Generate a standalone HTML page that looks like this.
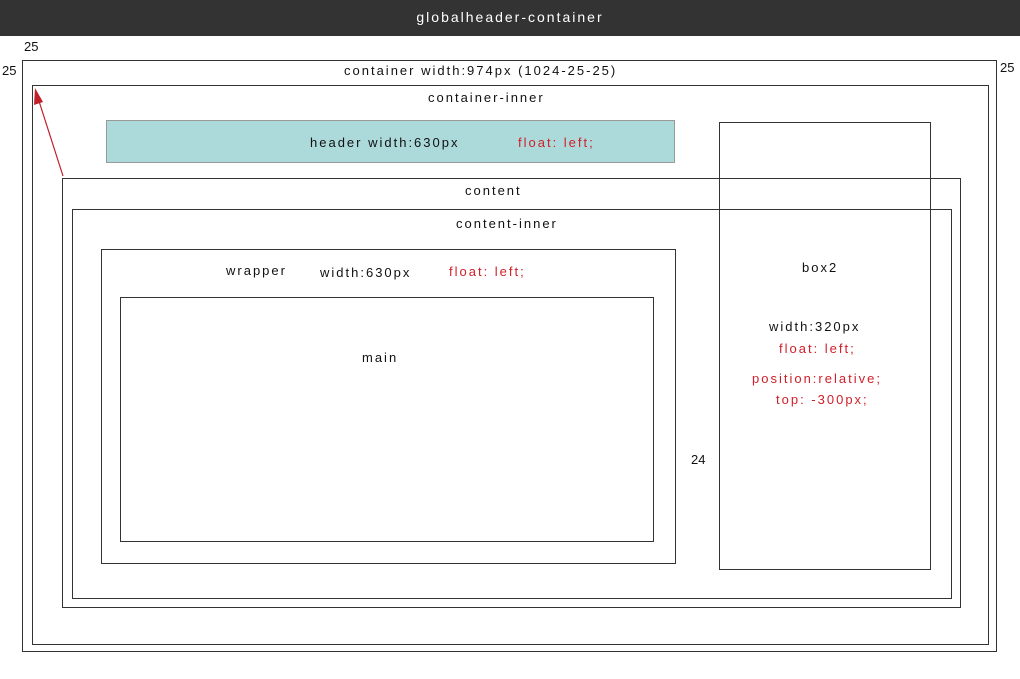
<!DOCTYPE html><html><head><style>
body{margin:0;width:1020px;height:679px;background:#fff;position:relative;font-family:"Liberation Sans",sans-serif;overflow:hidden}
.b{position:absolute;border:1px solid #333;box-sizing:border-box}
.t{position:absolute;font-size:13px;letter-spacing:2px;color:#111;white-space:nowrap}
.r{color:#d0202a}
</style></head><body>
<div style="position:absolute;left:0;top:0;width:1020px;height:36px;background:#333"></div>
<div class="t" style="left:0;width:1020px;text-align:center;top:9px;color:#fff;font-size:14px">globalheader-container</div>
<div class="b" style="left:22px;top:60px;width:975px;height:592px"></div>
<div class="b" style="left:32px;top:85px;width:957px;height:560px"></div>
<div class="b" style="left:106px;top:120px;width:569px;height:43px;background:#acdadb;border-color:#999"></div>
<div class="b" style="left:719px;top:122px;width:212px;height:448px"></div>
<div class="b" style="left:62px;top:178px;width:899px;height:430px"></div>
<div class="b" style="left:72px;top:209px;width:880px;height:390px"></div>
<div class="b" style="left:101px;top:249px;width:575px;height:315px"></div>
<div class="b" style="left:120px;top:297px;width:534px;height:245px"></div>
<svg style="position:absolute;left:0;top:0" width="1020" height="679"><line x1="63" y1="176" x2="38" y2="98" stroke="#c02028" stroke-width="1.2"/><polygon points="35,88 43,102 34,105" fill="#c02028"/></svg>
<div class="t" style="left:24px;top:39px;letter-spacing:0">25</div>
<div class="t" style="left:2px;top:63px;letter-spacing:0">25</div>
<div class="t" style="left:1000px;top:60px;letter-spacing:0">25</div>
<div class="t" style="left:691px;top:452px;letter-spacing:0">24</div>
<div class="t" style="left:344px;top:63px">container width:974px (1024-25-25)</div>
<div class="t" style="left:428px;top:90px">container-inner</div>
<div class="t" style="left:310px;top:135px">header width:630px</div>
<div class="t r" style="left:518px;top:135px">float: left;</div>
<div class="t" style="left:465px;top:183px">content</div>
<div class="t" style="left:456px;top:216px">content-inner</div>
<div class="t" style="left:226px;top:263px">wrapper</div>
<div class="t" style="left:320px;top:265px">width:630px</div>
<div class="t r" style="left:449px;top:264px">float: left;</div>
<div class="t" style="left:362px;top:350px">main</div>
<div class="t" style="left:802px;top:260px">box2</div>
<div class="t" style="left:769px;top:319px">width:320px</div>
<div class="t r" style="left:779px;top:341px">float: left;</div>
<div class="t r" style="left:752px;top:371px">position:relative;</div>
<div class="t r" style="left:776px;top:392px">top: -300px;</div>
</body></html>
